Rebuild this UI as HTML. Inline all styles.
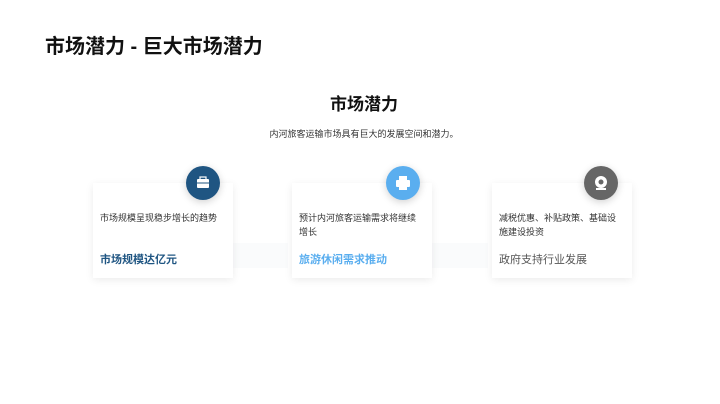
<!DOCTYPE html>
<html><head><meta charset="utf-8"><style>
body{margin:0;width:720px;height:404px;background:#fff;position:relative;overflow:hidden;font-family:"Liberation Sans","Noto Sans CJK SC",sans-serif}
.a{position:absolute}
h1{position:absolute;left:45px;top:30px;margin:0;font-size:20px;font-weight:bold;color:#111;white-space:nowrap}
.sub{left:4px;width:720px;text-align:center}
.card{position:absolute;top:183px;width:140px;height:95px;background:#fff;box-shadow:0 2px 8px rgba(0,0,0,.08)}
.card .d{position:absolute;left:7px;top:28px;font-size:9px;line-height:14px;color:#333;width:118px}
.card .t{position:absolute;left:7px;top:70px;font-size:11px;font-weight:bold;line-height:14px}
.ic{position:absolute;width:34px;height:34px;border-radius:50%;top:166px;box-shadow:0 2px 8px rgba(0,0,0,.18)}
.band{position:absolute;top:243px;height:25px;background:#fafbfc}
</style></head><body>
<h1>市场潜力 - 巨大市场潜力</h1>
<div class="a sub" style="top:90px;font-size:17px;font-weight:bold;color:#111">市场潜力</div>
<div class="a sub" style="top:127px;font-size:9px;color:#333">内河旅客运输市场具有巨大的发展空间和潜力。</div>
<div class="band" style="left:232px;width:56px"></div>
<div class="band" style="left:432px;width:56px"></div>
<div class="card" style="left:93px"><div class="d">市场规模呈现稳步增长的趋势</div><div class="t" style="color:#1f5582">市场规模达亿元</div></div>
<div class="card" style="left:292px"><div class="d">预计内河旅客运输需求将继续增长</div><div class="t" style="color:#5aaeef">旅游休闲需求推动</div></div>
<div class="card" style="left:492px"><div class="d">减税优惠、补贴政策、基础设施建设投资</div><div class="t" style="color:#555;font-weight:normal">政府支持行业发展</div></div>
<div class="ic" style="left:186px;background:#1f5582"><svg width="34" height="34"><rect x="11" y="13" width="12" height="9" rx="1" fill="#fff"/><rect x="14" y="11" width="6" height="3" fill="none" stroke="#fff" stroke-width="1.2"/><line x1="11" y1="17" x2="23" y2="17" stroke="#1f5582"/></svg></div>
<div class="ic" style="left:386px;background:#5aaeef"><svg width="34" height="34"><rect x="13" y="10" width="8" height="5" fill="#fff"/><rect x="10" y="14" width="14" height="7" rx="1" fill="#fff"/><rect x="13" y="19" width="8" height="5" fill="#fff"/></svg></div>
<div class="ic" style="left:584px;background:#666"><svg width="34" height="34"><circle cx="17" cy="16" r="6" fill="#fff"/><circle cx="17" cy="16" r="2.5" fill="#666"/><rect x="12" y="22" width="10" height="2" fill="#fff"/></svg></div>
</body></html>
